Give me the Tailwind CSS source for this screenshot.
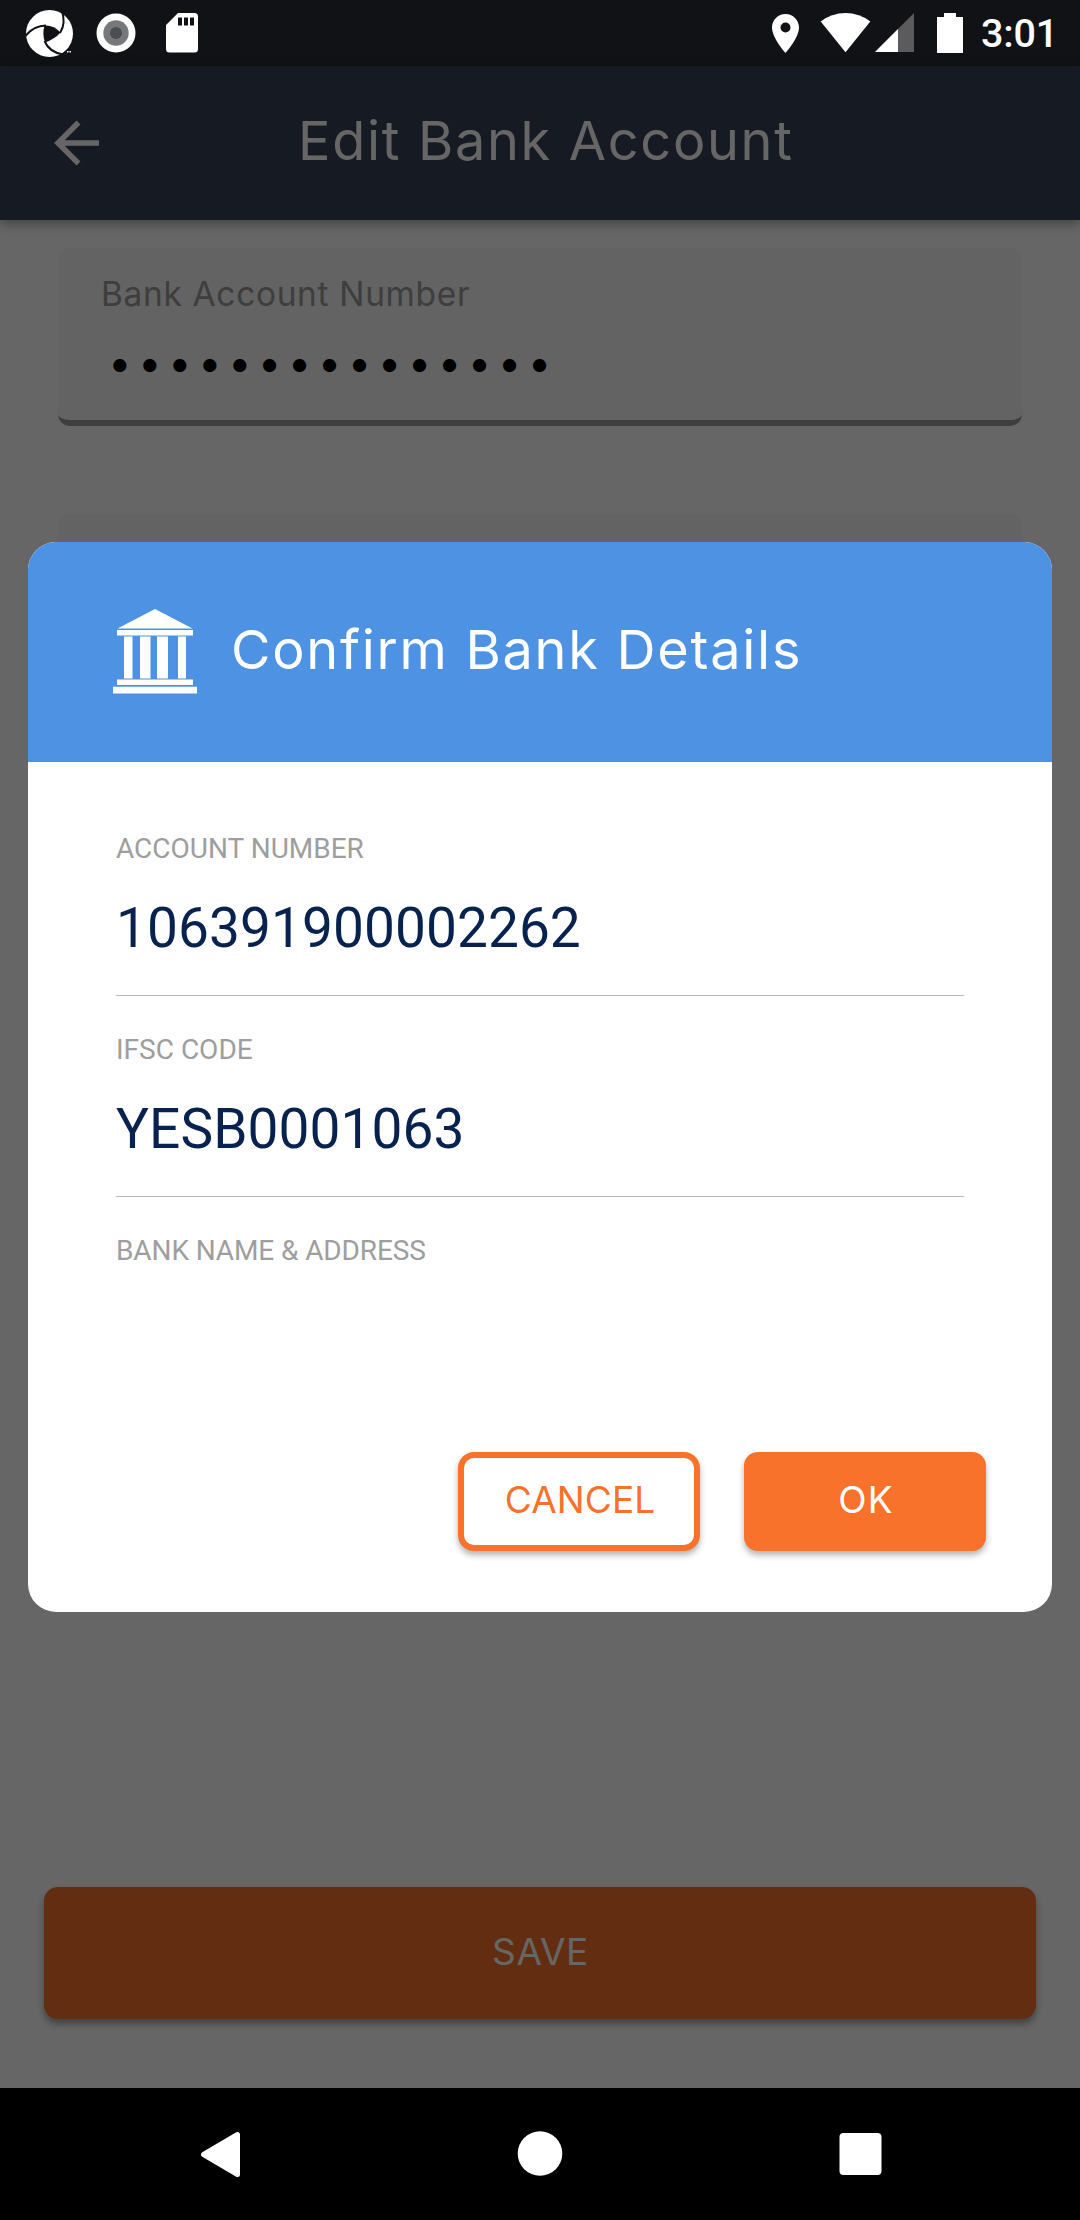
<!DOCTYPE html>
<html lang="en">
<head>
<meta charset="utf-8">
<meta name="viewport" content="width=device-width, initial-scale=1">
<title>Edit Bank Account</title>
<script src="https://cdn.jsdelivr.net/npm/@tailwindcss/browser@4"></script>
</head>
<body class="bg-black">
<div class="flex h-[2220px] w-[1080px] flex-col overflow-hidden font-['Inter',sans-serif]">

  <!-- Status bar -->
  <div class="flex h-[66px] shrink-0 items-center justify-between bg-[#111215] pr-[24px] pl-[26px]">
    <svg class="h-[66px] w-[180px]" viewBox="26 0 180 66" fill="#fff">
      <circle cx="49.5" cy="33.5" r="23.5"/>
      <path d="M44.500 25.500Q54 25 60.500 32.500Q55 39 45 42.500Q42 34 44.500 25.500Z" fill="#111215"/>
      <g fill="none" stroke="#111215" stroke-width="2">
        <path d="M25 36.500Q33 26 46 25.500"/>
        <path d="M60 33Q66.500 23 61.500 10"/>
        <path d="M44.500 41Q49 52 63 54.500"/>
      </g>
      <path d="M67 51h1.500v1.500h-1.500zM69.500 51h1.500v1.500h-1.500z"/>
      <circle cx="116" cy="33" r="19.500"/>
      <circle cx="116" cy="33" r="12.700" fill="#77787b"/>
      <circle cx="116" cy="33" r="6" fill="#4c4d50"/>
      <path fill-rule="evenodd" d="M178 13h16.500a3.500 3.500 0 0 1 3.500 3.500v32.500a3.500 3.500 0 0 1-3.500 3.500h-25a3.500 3.500 0 0 1-3.500-3.500V25zM178 17.500v8h4v-8zM184 17.500v8h4v-8zM190 17.500v8h4v-8z"/>
    </svg>
    <div class="flex items-center">
      <svg class="h-[66px] w-[200px]" viewBox="770 0 200 66" fill="#fff">
        <path fill-rule="evenodd" d="M785.500 14c-7.500 0-13.500 6-13.500 13.500C772 38 785.500 53 785.500 53S799 38 799 27.500C799 20 793 14 785.500 14zm0 8.500a5 5 0 1 1 0 10 5 5 0 0 1 0-10z"/>
        <path d="M845.500 52.300L820.700 21.500Q831.500 13 845.500 13T870.300 21.500z"/>
        <path d="M914 13v39h-39z" fill="#5b5b5d"/>
        <path d="M898 29v23h-23z"/>
        <path d="M944 13h12v4h7v36h-26V17h7z"/>
      </svg>
      <div class="ml-[11px] w-[75px] pt-[2px] font-['Roboto',sans-serif] text-[39.500px] leading-[66px] font-medium tracking-[-0.200px] whitespace-nowrap text-white">3:01</div>
    </div>
  </div>

  <!-- Screen content under the modal scrim -->
  <div class="relative flex h-[2022px] shrink-0 flex-col bg-white">
    <header class="relative flex h-[154px] shrink-0 items-center bg-[#374155] pl-[54px] shadow-[0_3px_12px_rgba(0,0,0,0.4)]">
      <svg class="size-[46px]" viewBox="0 0 46 46" fill="none" stroke="#fff" stroke-width="5.500"><path d="M45 23H5M24.500 2.500L4 23l20.500 20.500"/></svg>
      <h1 class="ml-[198px] pb-[4px] text-[54px] leading-none font-normal tracking-[1.700px] text-white">Edit Bank Account</h1>
    </header>
    <main class="flex flex-1 flex-col px-[58px] pt-[28px]">
      <div class="h-[178px] overflow-hidden rounded-[12px] border-b-[6px] border-[#9b9b9b] bg-[#f7f7f7] pt-[26px] pl-[43px]">
        <div class="text-[33.500px] leading-[40px] tracking-[0.650px] text-[#9b9b9b]">Bank Account Number</div>
        <div class="mt-[25px] pl-[7px] text-[42px] leading-[48px] tracking-[6.350px] text-black">•••••••••••••••</div>
      </div>
      <div class="mt-[88px] h-[178px] rounded-[12px] border-b-[6px] border-[#9b9b9b] bg-[#f7f7f7]"></div>
      <button class="-mx-[14px] mt-auto mb-[69px] h-[132px] rounded-[14px] bg-[#f8722b] pb-[3px] pl-[1px] text-[37px] tracking-[0.600px] text-white shadow-[0_5px_7px_rgba(0,0,0,0.35)]">SAVE</button>
    </main>

    <div class="absolute inset-0 bg-black/60"></div>

    <!-- Confirmation dialog -->
    <section class="absolute inset-x-[28px] top-[476px] flex h-[1070px] flex-col overflow-hidden rounded-[28px] bg-white">
      <div class="flex h-[220px] shrink-0 items-center bg-[#4e92e3] pl-[85px]">
        <svg class="mb-[2px] h-[85px] w-[84px]" viewBox="113 608.500 84 85" fill="#fff">
          <path d="M155 608.500l37.500 19.500h-75z"/>
          <path d="M117 629.500h76v5.500h-76zM124 636h8.500v42H124zM140 636h10.500v42H140zM157 636h11v42h-11zM178 636h8v42h-8zM117 679h76v5.500h-76zM113 686.200h84v6.800h-84z"/>
        </svg>
        <h2 class="ml-[34px] pb-[4px] text-[54px] leading-none font-normal tracking-[1.750px] text-white">Confirm Bank Details</h2>
      </div>
      <div class="flex flex-1 flex-col px-[88px] pt-[70px] font-['Roboto',sans-serif]">
        <div class="h-[201px]">
          <div class="pt-px text-[28px] leading-[32px] text-[#9e9e9e]">ACCOUNT NUMBER</div>
          <div class="mt-[31px] text-[55px] leading-[64px] tracking-[0.080px] text-[#07224f]">106391900002262</div>
          <div class="mt-[35px] h-px bg-[#b8b8b8]"></div>
        </div>
        <div class="h-[201px]">
          <div class="pt-px text-[28px] leading-[32px] text-[#9e9e9e]">IFSC CODE</div>
          <div class="mt-[31px] text-[55px] leading-[64px] tracking-[0.080px] text-[#07224f]">YESB0001063</div>
          <div class="mt-[35px] h-px bg-[#b8b8b8]"></div>
        </div>
        <div class="pt-px text-[28px] leading-[32px] tracking-[-0.100px] text-[#9e9e9e]">BANK NAME &amp; ADDRESS</div>
      </div>
      <div class="mb-[61px] flex justify-end gap-[44px] pr-[66px]">
        <button class="h-[99px] w-[242px] rounded-[16px] border-[6px] border-[#f8722b] bg-white pb-[3px] pl-[2px] text-[37px] tracking-[0.100px] text-[#f8722b] shadow-[0_4px_6px_rgba(0,0,0,0.3)]">CANCEL</button>
        <button class="h-[99px] w-[242px] rounded-[14px] bg-[#f8722b] pb-[3px] pl-[2px] text-[37px] tracking-[1.200px] text-white shadow-[0_4px_6px_rgba(0,0,0,0.3)]">OK</button>
      </div>
    </section>
  </div>

  <!-- Navigation bar -->
  <nav class="flex h-[132px] shrink-0 items-center justify-between bg-black pr-[198px] pl-[200px]">
    <svg class="h-[48px] w-[41px]" viewBox="200 2130 41 48" fill="#fff" stroke="#fff" stroke-width="5" stroke-linejoin="round"><path d="M237.500 2134.500v40L203.500 2154.500z"/></svg>
    <svg class="size-[46px]" viewBox="0 0 46 46" fill="#fff"><circle cx="23" cy="22.500" r="22.300"/></svg>
    <svg class="h-[44px] w-[43px]" viewBox="0 0 43 44" fill="#fff"><rect x=".5" y="1" width="42" height="42" rx="4"/></svg>
  </nav>
</div>
</body>
</html>
